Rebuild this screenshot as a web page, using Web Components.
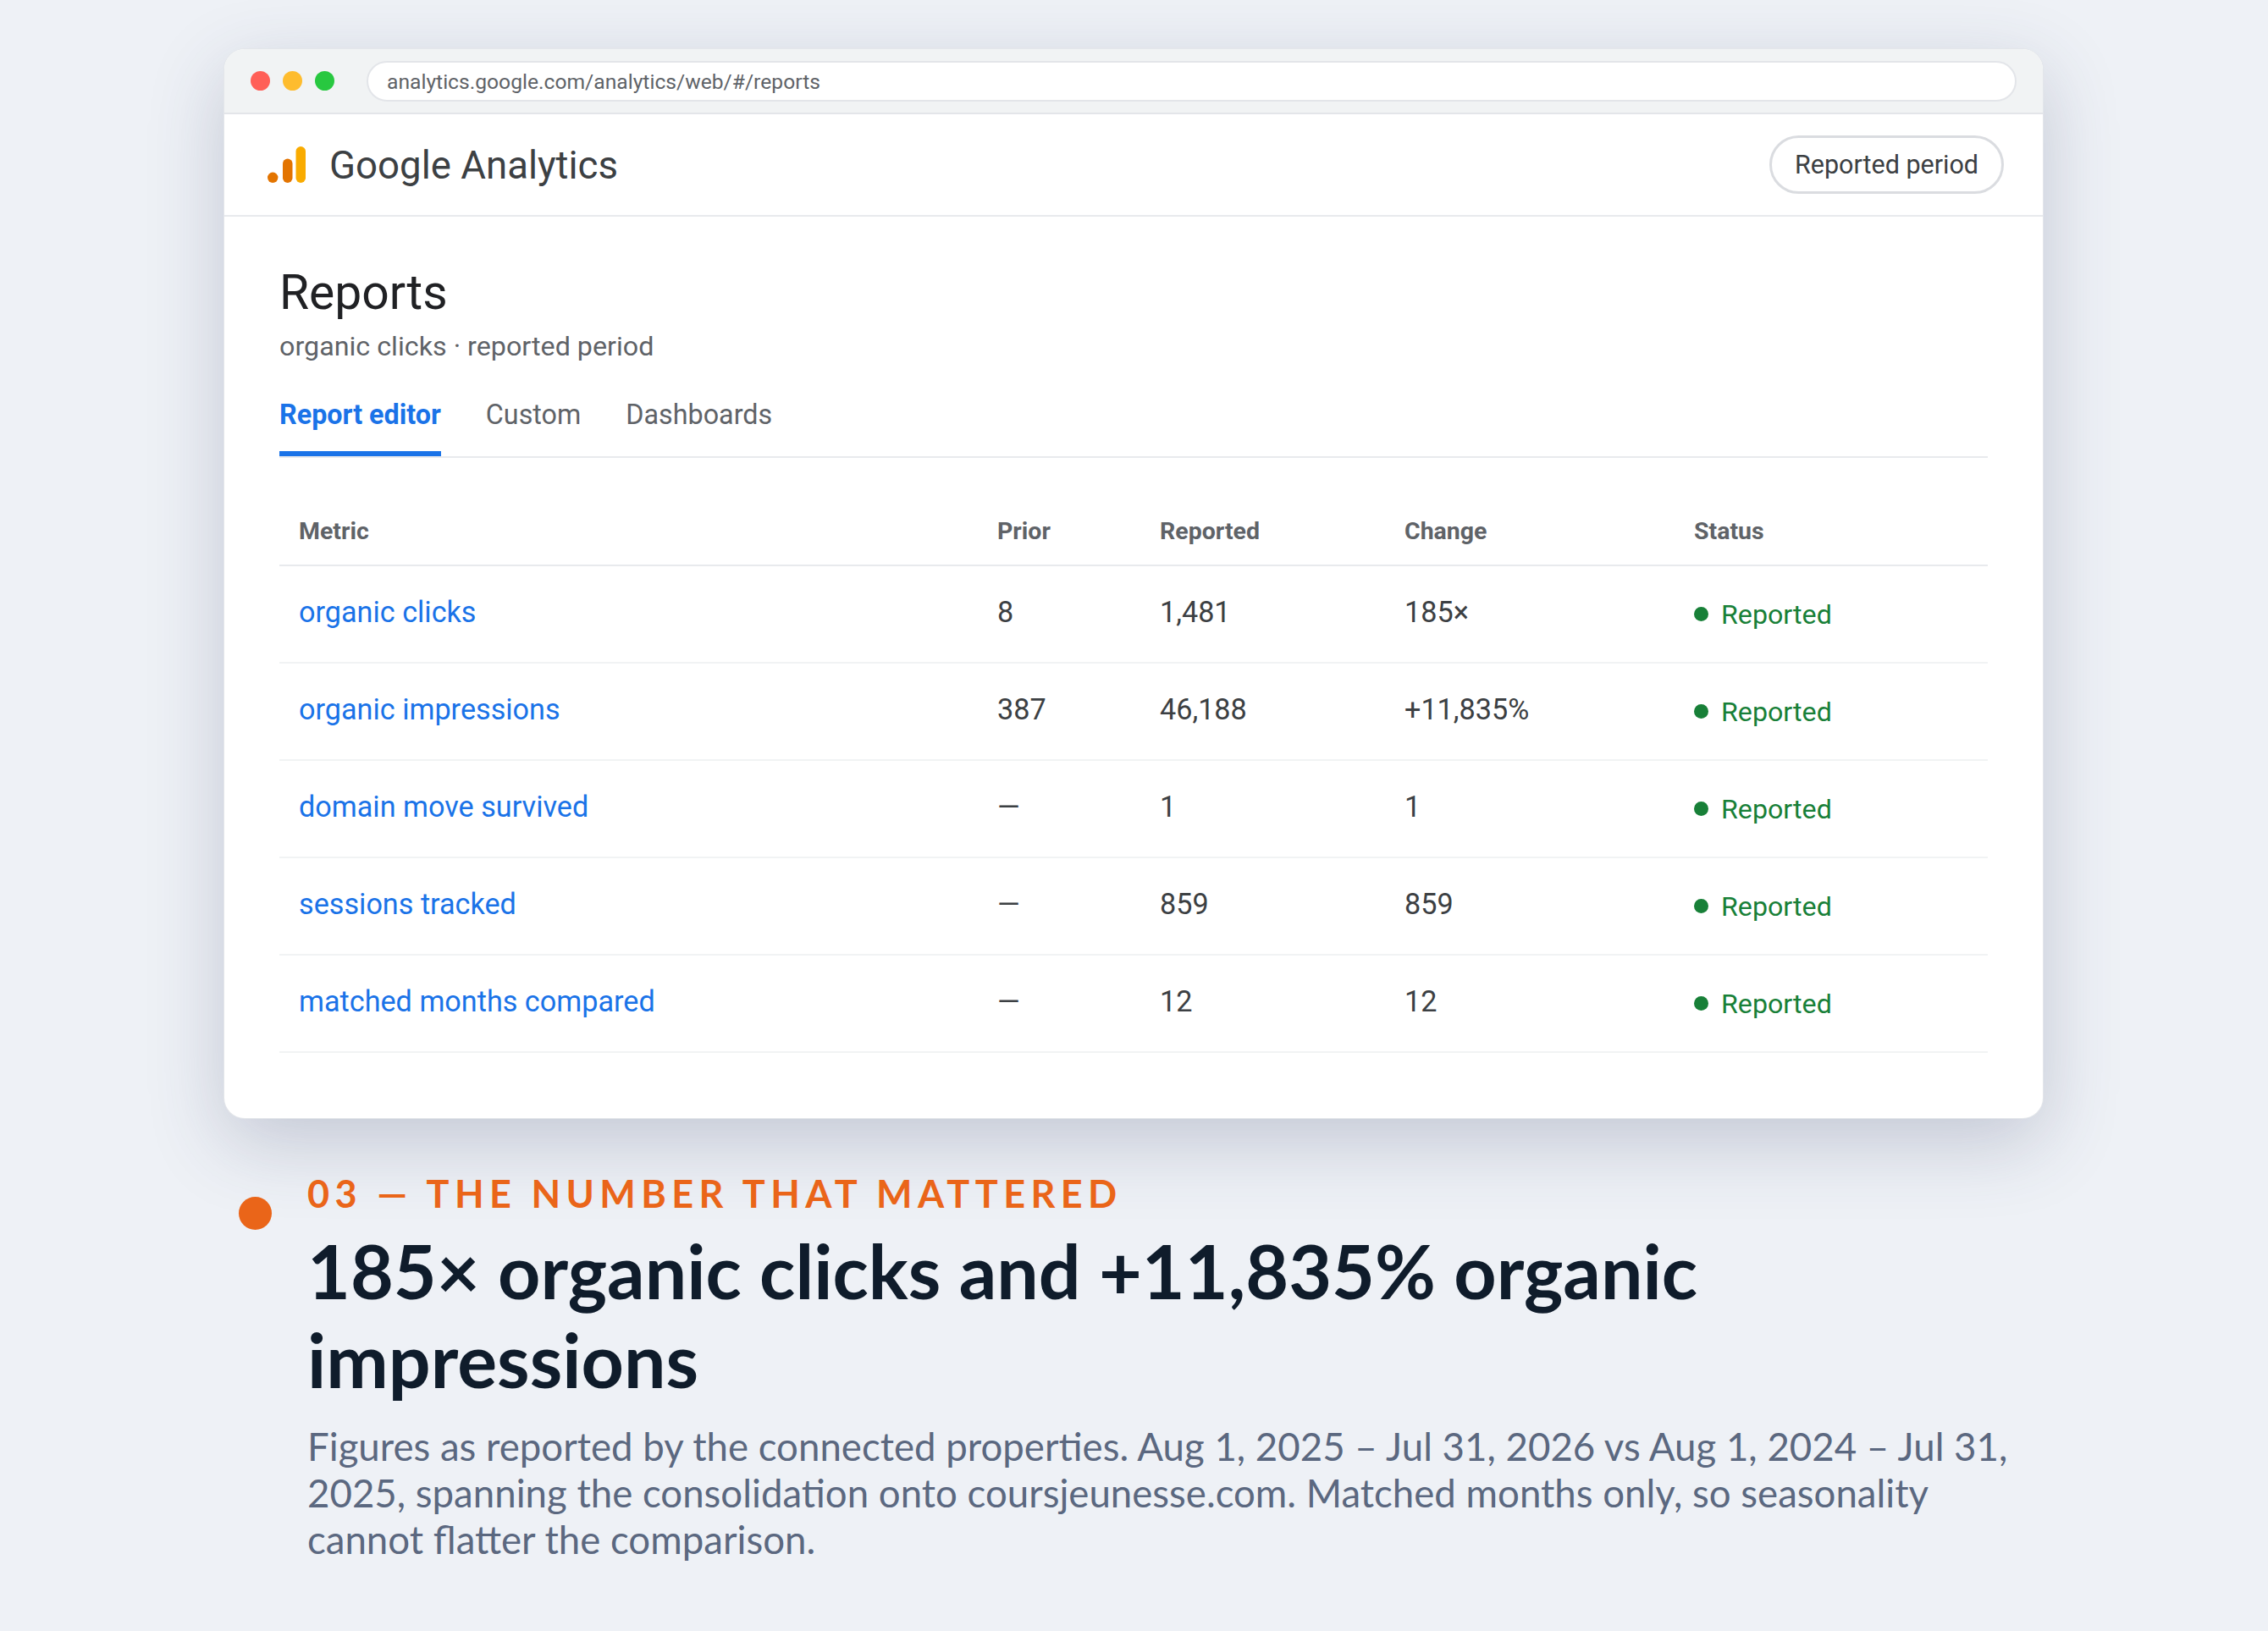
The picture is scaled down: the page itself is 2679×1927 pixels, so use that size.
<!DOCTYPE html>
<html>
<head>
<meta charset="utf-8">
<style>
  html, body { margin: 0; padding: 0; background: #eef1f6; }
  body { width: 2679px; height: 1927px; overflow: hidden; font-family: Roboto, sans-serif; }
</style>
</head>
<body>
<report-page>
  <browser-window url="analytics.google.com/analytics/web/#/reports">
    <ga-header action="Reported period"></ga-header>
    <report-body heading="Reports" sub="organic clicks · reported period">
      <report-tabs tabs="Report editor,Custom,Dashboards"></report-tabs>
      <metric-table>
        <metric-row head metric="Metric" prior="Prior" reported="Reported" change="Change" status="Status"></metric-row>
        <metric-row metric="organic clicks" prior="8" reported="1,481" change="185×" status="Reported"></metric-row>
        <metric-row metric="organic impressions" prior="387" reported="46,188" change="+11,835%" status="Reported"></metric-row>
        <metric-row metric="domain move survived" prior="—" reported="1" change="1" status="Reported"></metric-row>
        <metric-row metric="sessions tracked" prior="—" reported="859" change="859" status="Reported"></metric-row>
        <metric-row metric="matched months compared" prior="—" reported="12" change="12" status="Reported"></metric-row>
      </metric-table>
    </report-body>
  </browser-window>
  <story-note eyebrow="03 — THE NUMBER THAT MATTERED" title="185× organic clicks and +11,835% organic impressions">
    Figures as reported by the connected properties. Aug 1, 2025 – Jul 31, 2026 vs Aug 1, 2024 – Jul 31, 2025, spanning the consolidation onto coursjeunesse.com. Matched months only, so seasonality cannot flatter the comparison.
  </story-note>
</report-page>

<script>
class ReportPage extends HTMLElement {
  constructor() {
    super();
    this.attachShadow({mode: 'open'}).innerHTML = `
      <style>
        :host { display: block; padding: 58px 266px 0 265px; }
      </style>
      <slot></slot>`;
  }
}

class BrowserWindow extends HTMLElement {
  constructor() {
    super();
    this.attachShadow({mode: 'open'}).innerHTML = `
      <style>
        :host {
          display: block; height: 1263px; box-sizing: border-box;
          background: #fff; border-radius: 24px; overflow: visible;
          box-shadow: 0 0 0 1px #e3e6ea, 0 28px 90px rgba(50, 60, 100, .23);
        }
        .bar {
          display: flex; align-items: center; height: 75px;
          background: #f1f3f4; border-bottom: 2px solid #e3e5e9;
          border-radius: 24px 24px 0 0; padding: 0 31px;
        }
        .dots { display: flex; gap: 15px; margin-right: 38px; }
        .dots i { width: 23px; height: 23px; border-radius: 50%; display: block; }
        .url {
          flex: 1; height: 48px; box-sizing: border-box; background: #fff;
          border: 2px solid #e3e5e9; border-radius: 24px; padding: 1px 0 0 22px;
          display: flex; align-items: center;
          font: 400 24.65px Roboto, sans-serif; color: #5f6368;
        }
      </style>
      <div class="bar">
        <div class="dots">
          <i style="background:#ff5f57"></i><i style="background:#febc2e"></i><i style="background:#28c840"></i>
        </div>
        <div class="url">${this.getAttribute('url')}</div>
      </div>
      <slot></slot>`;
  }
}

class GaHeader extends HTMLElement {
  constructor() {
    super();
    this.attachShadow({mode: 'open'}).innerHTML = `
      <style>
        :host {
          display: flex; align-items: center; justify-content: space-between; box-sizing: border-box;
          height: 121px; border-bottom: 2px solid #e8eaed; padding: 0 46px 0 51px;
        }
        .brand { display: flex; align-items: center; gap: 28px; }
        svg { display: block; }
        .name { font: 400 45.6px/54px Roboto, sans-serif; color: #3c4043; padding-top: 2px; }
        .btn {
          box-sizing: border-box; height: 69px; width: 277px; justify-content: center; display: flex; align-items: center;
          border: 3px solid #dadce0; border-radius: 35px;
          font: 400 30.5px Roboto, sans-serif; color: #3c4043;
        }
      </style>
      <div class="brand">
        <svg width="45" height="43" viewBox="0 0 45 43">
          <rect x="33.5" y="0" width="11.5" height="43" rx="5.75" fill="#f9ab00"/>
          <rect x="18" y="14.5" width="11.5" height="28.5" rx="5.75" fill="#e37400"/>
          <circle cx="6.2" cy="36.8" r="6.2" fill="#e37400"/>
        </svg>
        <span class="name">Google Analytics</span>
      </div>
      <div class="btn">${this.getAttribute('action')}</div>`;
  }
}

class ReportBody extends HTMLElement {
  constructor() {
    super();
    this.attachShadow({mode: 'open'}).innerHTML = `
      <style>
        :host { display: block; padding: 56px 65px 0; }
        h1 { margin: 0; font: 400 57px/68px Roboto, sans-serif; color: #202124; }
        p { margin: 7px 0 0; font: 400 32.25px/44px Roboto, sans-serif; color: #5f6368; }
      </style>
      <h1>${this.getAttribute('heading')}</h1>
      <p>${this.getAttribute('sub')}</p>
      <slot></slot>`;
  }
}

class ReportTabs extends HTMLElement {
  constructor() {
    super();
    const tabs = this.getAttribute('tabs').split(',');
    this.attachShadow({mode: 'open'}).innerHTML = `
      <style>
        :host {
          display: flex; gap: 53px; margin-top: 30px; height: 80px; box-sizing: border-box;
          border-bottom: 2px solid #e8eaed;
        }
        .tab {
          font: 400 32.3px/44px Roboto, sans-serif; color: #5f6368;
          padding-top: 7px; box-sizing: border-box; height: 78px;
        }
        .on { font-weight: 700; color: #1a73e8; border-bottom: 6px solid #1a73e8; }
      </style>
      ${tabs.map((t, i) => `<div class="tab ${i == 0 ? 'on' : ''}">${t}</div>`).join('')}`;
  }
}

class MetricTable extends HTMLElement {
  constructor() {
    super();
    this.attachShadow({mode: 'open'}).innerHTML = `
      <style>
        :host { display: block; margin-top: 50px; }
      </style>
      <slot></slot>`;
  }
}

class MetricRow extends HTMLElement {
  constructor() {
    super();
    const a = n => this.getAttribute(n);
    const head = this.hasAttribute('head');
    this.attachShadow({mode: 'open'}).innerHTML = `
      <style>
        :host {
          display: grid; grid-template-columns: 825px 192px 289px 342px 1fr;
          align-items: center; box-sizing: border-box;
          height: ${head ? 78 : 115}px;
          border-bottom: 2px solid ${head ? '#e8eaed' : '#f1f3f4'};
          font: ${head ? 700 : 400} ${head ? 28.5 : 34.2}px Roboto, sans-serif;
          color: ${head ? '#5f6368' : '#3c4043'};
        }
        div { padding-left: 23px; padding-bottom: ${head ? 4 : 5}px; }
        .metric { color: ${head ? 'inherit' : '#1a73e8'}; }
        .status { display: flex; align-items: center; gap: 15px; color: #188038; font-size: 32.2px; padding-bottom: 0; }
        .status i { width: 17px; height: 17px; border-radius: 50%; background: #188038; display: block; }
      </style>
      <div class="metric">${a('metric')}</div>
      <div>${a('prior')}</div>
      <div>${a('reported')}</div>
      <div>${a('change')}</div>
      ${head ? `<div>${a('status')}</div>` : `<div class="status"><i></i>${a('status')}</div>`}`;
  }
}

class StoryNote extends HTMLElement {
  constructor() {
    super();
    this.attachShadow({mode: 'open'}).innerHTML = `
      <style>
        :host { display: grid; grid-template-columns: 98px 1fr; margin-top: 60px; margin-right: -10px; font-family: Lato, sans-serif; }
        .dot { width: 39px; height: 39px; border-radius: 50%; background: #ea6519; margin: 33px 0 0 17px; }
        .eyebrow { font: 700 45px/58px Lato, sans-serif; letter-spacing: 6.38px; color: #ea6519; }
        h2 { margin: 10px 0 0; font: 700 87.8px/105px Lato, sans-serif; color: #0f1c2b; }
        p { margin: 21.5px 0 0; font: 400 45.6px/55px Lato, sans-serif; color: #5b6880; }
      </style>
      <div class="dot"></div>
      <div>
        <div class="eyebrow">${this.getAttribute('eyebrow')}</div>
        <h2>${this.getAttribute('title')}</h2>
        <p><slot></slot></p>
      </div>`;
  }
}

customElements.define('report-page', ReportPage);
customElements.define('browser-window', BrowserWindow);
customElements.define('ga-header', GaHeader);
customElements.define('report-body', ReportBody);
customElements.define('report-tabs', ReportTabs);
customElements.define('metric-table', MetricTable);
customElements.define('metric-row', MetricRow);
customElements.define('story-note', StoryNote);
</script>
</body>
</html>
